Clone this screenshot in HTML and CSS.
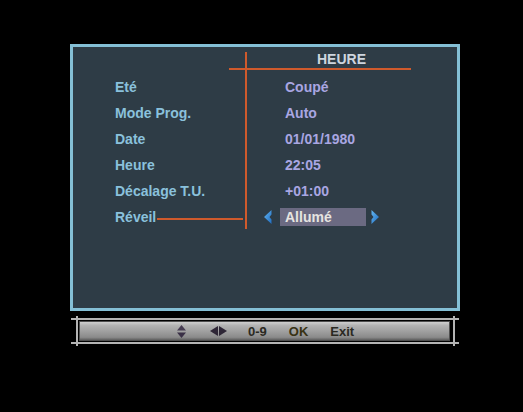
FILE: index.html
```html
<!DOCTYPE html>
<html lang="fr">
<head>
<meta charset="utf-8">
<title>Heure</title>
<link rel="stylesheet" href="styles.css">
</head>
<body>
<div class="screen">
  <div class="panel">
    <div class="labels">
      <div class="row">Eté</div>
      <div class="row">Mode Prog.</div>
      <div class="row">Date</div>
      <div class="row">Heure</div>
      <div class="row">Décalage T.U.</div>
      <div class="row reveil"><span>Réveil</span><span class="link"></span></div>
    </div>
    <div class="values">
      <div class="header">HEURE</div>
      <div class="row val">Coupé</div>
      <div class="row val">Auto</div>
      <div class="row val">01/01/1980</div>
      <div class="row val">22:05</div>
      <div class="row val">+01:00</div>
      <div class="row select">
        <svg class="arrow" width="8" height="14" viewBox="0 0 8 14">
          <defs><linearGradient id="bl" x1="0" y1="0" x2="1" y2="1"><stop offset="0" stop-color="#63b6f2"/><stop offset="1" stop-color="#1f6cc0"/></linearGradient></defs>
          <polygon points="7.5,0 7.5,4.5 5.5,7 7.5,9.5 7.5,14 0,7" fill="url(#bl)"/>
        </svg>
        <span class="box">Allumé</span>
        <svg class="arrow" width="8" height="14" viewBox="0 0 8 14">
          <defs><linearGradient id="br" x1="0" y1="0" x2="1" y2="1"><stop offset="0" stop-color="#63b6f2"/><stop offset="1" stop-color="#1f6cc0"/></linearGradient></defs>
          <polygon points="0.5,0 8,7 0.5,14 0.5,9.5 2.5,7 0.5,4.5" fill="url(#br)"/>
        </svg>
      </div>
    </div>
  </div>
  <div class="footer">
    <div class="bar">
      <svg class="ud" width="9" height="13" viewBox="0 0 9 13">
        <polygon points="4.5,0 9,5.5 0,5.5" fill="#463c52"/>
        <polygon points="0,7.5 9,7.5 4.5,13" fill="#3a3046"/>
      </svg>
      <svg class="lr" width="17" height="10" viewBox="0 0 17 10">
        <polygon points="0,5 8,0 8,10" fill="#2e2636"/>
        <polygon points="9,0 17,5 9,10" fill="#2e2636"/>
      </svg>
      <span class="key k09">0-9</span>
      <span class="key kok">OK</span>
      <span class="key kexit">Exit</span>
    </div>
  </div>
</div>
</body>
</html>
```

FILE: styles.css
```css
html, body {
  margin: 0;
  padding: 0;
  background: #000;
}
body {
  width: 523px;
  height: 412px;
  overflow: hidden;
  font-family: "Liberation Sans", Arial, sans-serif;
  font-weight: bold;
}
.screen {
  padding-top: 44px;
}
.panel {
  margin-left: 70px;
  width: 384px;
  height: 261px;
  border: 3px solid #84bfd5;
  background: #2e3c46;
  display: flex;
  align-items: flex-start;
}
.labels {
  width: 172px;
  box-sizing: border-box;
  padding: 27px 2px 0 42px;
  color: #8ac1dc;
}
.row {
  height: 26px;
  line-height: 26px;
  font-size: 14px;
  white-space: nowrap;
}
.reveil {
  display: flex;
}
.link {
  flex: 1;
  height: 2px;
  margin: 14px 0 0 1px;
  background: #cf5a2c;
}
.values {
  margin-top: 5px;
  height: 177px;
  width: 190px;
  border-left: 2px solid #cf5a2c;
  padding-left: 17px;
}
.header {
  margin-left: -35px;
  width: 182px;
  box-sizing: border-box;
  padding-left: 88px;
  font-size: 14px;
  line-height: 14px;
  padding-bottom: 2px;
  border-bottom: 2px solid #cf5a2c;
  margin-bottom: 4px;
  color: #cdd5de;
}
.val {
  padding-left: 21px;
  color: #a9a6e2;
}
.select {
  display: flex;
  align-items: center;
}
.arrow {
  display: block;
  flex: none;
}
.box {
  margin-left: 8px;
  margin-right: 5px;
  width: 86px;
  height: 18px;
  line-height: 18px;
  box-sizing: border-box;
  padding-left: 5px;
  background: #6b6a82;
  color: #e6e4e0;
}
.footer {
  position: relative;
  margin-top: 7px;
  margin-left: 71px;
  width: 388px;
  box-sizing: border-box;
  border-top: 2px solid #b4b4b4;
  border-bottom: 2px solid #b4b4b4;
  padding: 1px 9px 1px 8px;
}
.footer::before,
.footer::after {
  content: "";
  position: absolute;
  top: -4px;
  width: 2px;
  height: 30px;
  background: #b4b4b4;
}
.footer::before {
  left: 5px;
}
.footer::after {
  right: 4px;
}
.bar {
  height: 20px;
  box-sizing: border-box;
  border: 1px solid #4e4e4e;
  background: linear-gradient(#cfcfcf 0%, #b2b2b2 20%, #9e9e9e 55%, #8a8a8a 85%, #5e5e5e 100%);
  display: flex;
  align-items: center;
  padding-left: 97px;
  font-size: 13px;
  color: #2a2922;
}
.ud {
  display: block;
  flex: none;
}
.lr {
  display: block;
  flex: none;
  margin-left: 24px;
}
.k09 {
  margin-left: 21px;
}
.kok {
  margin-left: 22px;
  color: #383214;
}
.kexit {
  margin-left: 22px;
}
```
